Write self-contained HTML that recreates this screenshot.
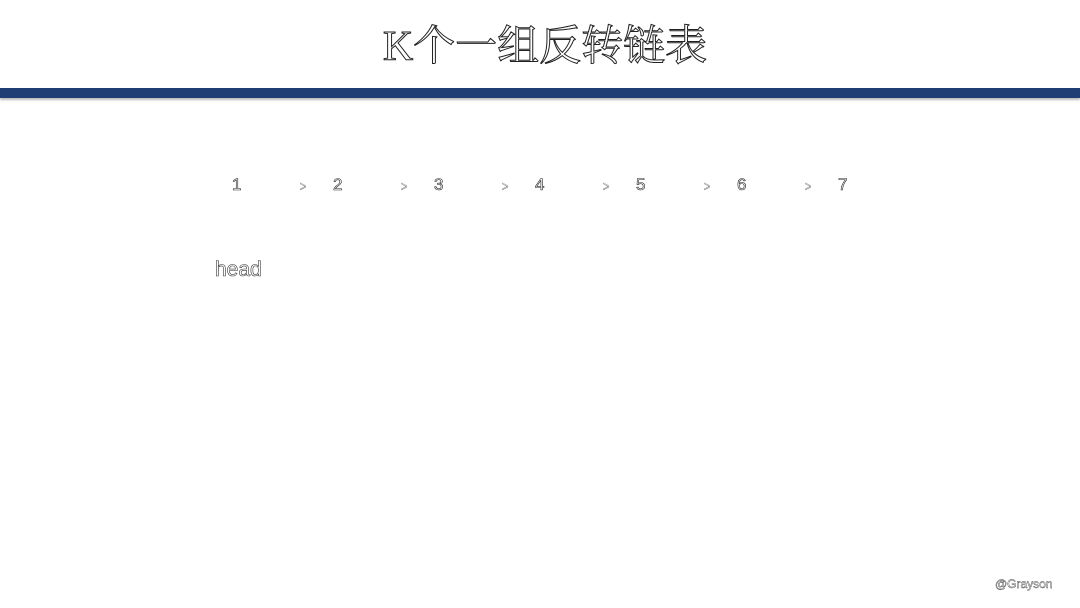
<!DOCTYPE html>
<html><head><meta charset="utf-8"><style>
html,body{margin:0;padding:0;background:#fff;}
body{width:1080px;height:608px;position:relative;overflow:hidden;font-family:"Liberation Sans","Noto Sans CJK SC",sans-serif;}
.o{position:absolute;color:#fff;-webkit-text-stroke:0.8px #333;white-space:nowrap;}
#t{left:0;width:1090px;text-align:center;top:22px;font-size:42px;line-height:50px;font-family:"Liberation Serif","Noto Serif CJK SC",serif;-webkit-text-stroke:1px #222;}
#bar{position:absolute;left:0;top:88px;width:1080px;height:10px;background:#1f3f74;box-shadow:0 2px 2px #bbb;}
.n{position:absolute;top:175px;font-size:17px;color:#fff;-webkit-text-stroke:0.6px #222;}
.a{position:absolute;top:178px;font-size:14px;color:#fff;-webkit-text-stroke:0.4px #555;transform:scaleX(0.8);}
</style></head><body>
<div class="o" id="t">K个一组反转链表</div>
<div id="bar"></div>
<div class="n" style="left:232px">1</div>
<div class="a" style="left:299px">&gt;</div><div class="n" style="left:333px">2</div>
<div class="a" style="left:400px">&gt;</div><div class="n" style="left:434px">3</div>
<div class="a" style="left:501px">&gt;</div><div class="n" style="left:535px">4</div>
<div class="a" style="left:602px">&gt;</div><div class="n" style="left:636px">5</div>
<div class="a" style="left:703px">&gt;</div><div class="n" style="left:737px">6</div>
<div class="a" style="left:804px">&gt;</div><div class="n" style="left:838px">7</div>
<div class="o" style="left:215px;top:258px;font-size:21px;-webkit-text-stroke:0.6px #333;">head</div>
<div class="o" style="left:995px;top:577px;font-size:12px;-webkit-text-stroke:0.4px #333;">@Grayson</div>
</body></html>
